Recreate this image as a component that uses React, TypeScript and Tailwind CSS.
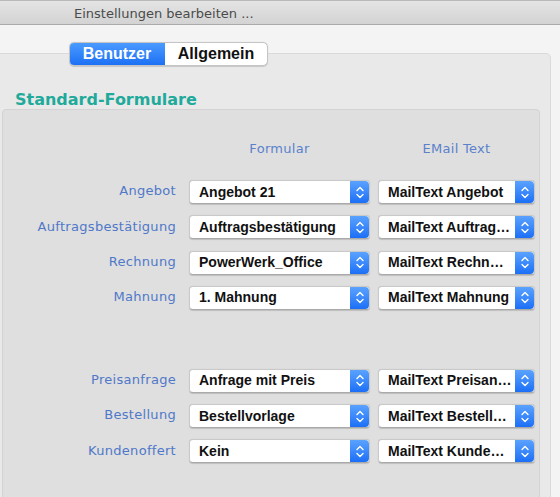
import React from "react";

const labelFont = { fontFamily: '"DejaVu Sans", "Lucida Grande", sans-serif' };

function Stepper() {
  return (
    <div className="w-[19px] h-full rounded-r-[4px] bg-gradient-to-b from-[#5aa2ff] to-[#1b6ff6] flex items-center justify-center">
      <svg width="8" height="13" viewBox="0 0 8 13" fill="none">
        <path d="M1 4.5 L4 1.5 L7 4.5" stroke="white" strokeWidth="1.4" strokeLinecap="round" strokeLinejoin="round" />
        <path d="M1 8.5 L4 11.5 L7 8.5" stroke="white" strokeWidth="1.4" strokeLinecap="round" strokeLinejoin="round" />
      </svg>
    </div>
  );
}

function Popup({ value, width }: { value: string; width: string }) {
  return (
    <div
      className={`${width} h-[24px] flex rounded-[4px] bg-white border border-[#c9c9c9] border-b-[#a9a9a9] shadow-[0_0.5px_1px_rgba(0,0,0,0.15)]`}
    >
      <div className="flex-1 min-w-0 pl-[9px] flex items-center text-[14px] font-bold text-[#111] overflow-hidden whitespace-nowrap font-['Liberation_Sans',Arial,sans-serif]">
        {value}
      </div>
      <Stepper />
    </div>
  );
}

function Row({ label, form, mail }: { label: string; form: string; mail: string }) {
  return (
    <div className="flex items-center h-[24px]">
      <div
        className="w-[173px] text-right text-[13px] tracking-[0.3px] text-[#4f78c9] pb-[2px]"
        style={labelFont}
      >
        {label}
      </div>
      <div className="ml-[13px]">
        <Popup value={form} width="w-[181px]" />
      </div>
      <div className="ml-[8px]">
        <Popup value={mail} width="w-[157px]" />
      </div>
    </div>
  );
}

export default function App() {
  const rows1 = [
    { label: "Angebot", form: "Angebot 21", mail: "MailText Angebot" },
    { label: "Auftragsbestätigung", form: "Auftragsbestätigung", mail: "MailText Auftrag…" },
    { label: "Rechnung", form: "PowerWerk_Office", mail: "MailText Rechn…" },
    { label: "Mahnung", form: "1. Mahnung", mail: "MailText Mahnung" },
  ];
  const rows2 = [
    { label: "Preisanfrage", form: "Anfrage mit Preis", mail: "MailText Preisan…" },
    { label: "Bestellung", form: "Bestellvorlage", mail: "MailText Bestell…" },
    { label: "Kundenoffert", form: "Kein", mail: "MailText Kunde…" },
  ];

  return (
    <div className="w-[560px] h-[497px] overflow-hidden bg-[#f4f4f4] flex flex-col">
      {/* window title strip, cut off at the top */}
      <div className="h-[2px] bg-[#e6e6e6]" />
      <div className="h-[25px] shrink-0 bg-gradient-to-b from-[#e4e4e4] to-[#d3d3d3] border-t border-[#b9b9b9] border-b border-b-[#aaaaaa] flex items-center pl-[74px]">
        <span className="text-[13px] text-[#4b4b4b] pt-[2px]" style={labelFont}>
          Einstellungen bearbeiten ...
        </span>
      </div>

      <div className="pt-[17px] flex flex-col">
        {/* segmented control */}
        <div className="relative z-10 ml-[69px] flex h-[24px] w-[199px] rounded-[5px] border border-[#c4c4c4] bg-white shadow-[0_0.5px_1px_rgba(0,0,0,0.15)] overflow-hidden font-['Liberation_Sans',Arial,sans-serif] text-[16px] font-bold">
          <div className="w-[96px] -my-px -ml-px bg-gradient-to-b from-[#4c9cff] to-[#1a6ef4] text-white flex items-center justify-center rounded-l-[5px]">
            Benutzer
          </div>
          <div className="flex-1 flex items-center justify-center text-[#111]">Allgemein</div>
        </div>

        {/* tab box */}
        <div className="-mt-[13px] -ml-[6px] w-[557px] h-[460px] rounded-[5px] border border-[#dadada] bg-[#e9e9e9] pt-[36px]">
          <div
            className="pl-[20px] text-[16px] font-bold text-[#1faa9b] leading-[20px]"
            style={labelFont}
          >
            Standard-Formulare
          </div>
          <div className="-mt-[1px] ml-[7px] w-[538px] h-[400px] rounded-[4px] border border-[#d3d3d3] bg-[#dfdfdf] pt-[31px]">
            <div className="flex text-[13px] tracking-[0.3px] text-[#5a82cc] leading-[16px]" style={labelFont}>
              <div className="w-[186px]" />
              <div className="w-[181px] text-center">Formular</div>
              <div className="w-[8px]" />
              <div className="w-[157px] text-center">EMail Text</div>
            </div>
            <div className="mt-[23px] flex flex-col gap-[11.3px]">
              {rows1.map((r) => (
                <Row key={r.label} {...r} />
              ))}
            </div>
            <div className="mt-[59px] flex flex-col gap-[11.3px]">
              {rows2.map((r) => (
                <Row key={r.label} {...r} />
              ))}
            </div>
          </div>
        </div>
      </div>
    </div>
  );
}
